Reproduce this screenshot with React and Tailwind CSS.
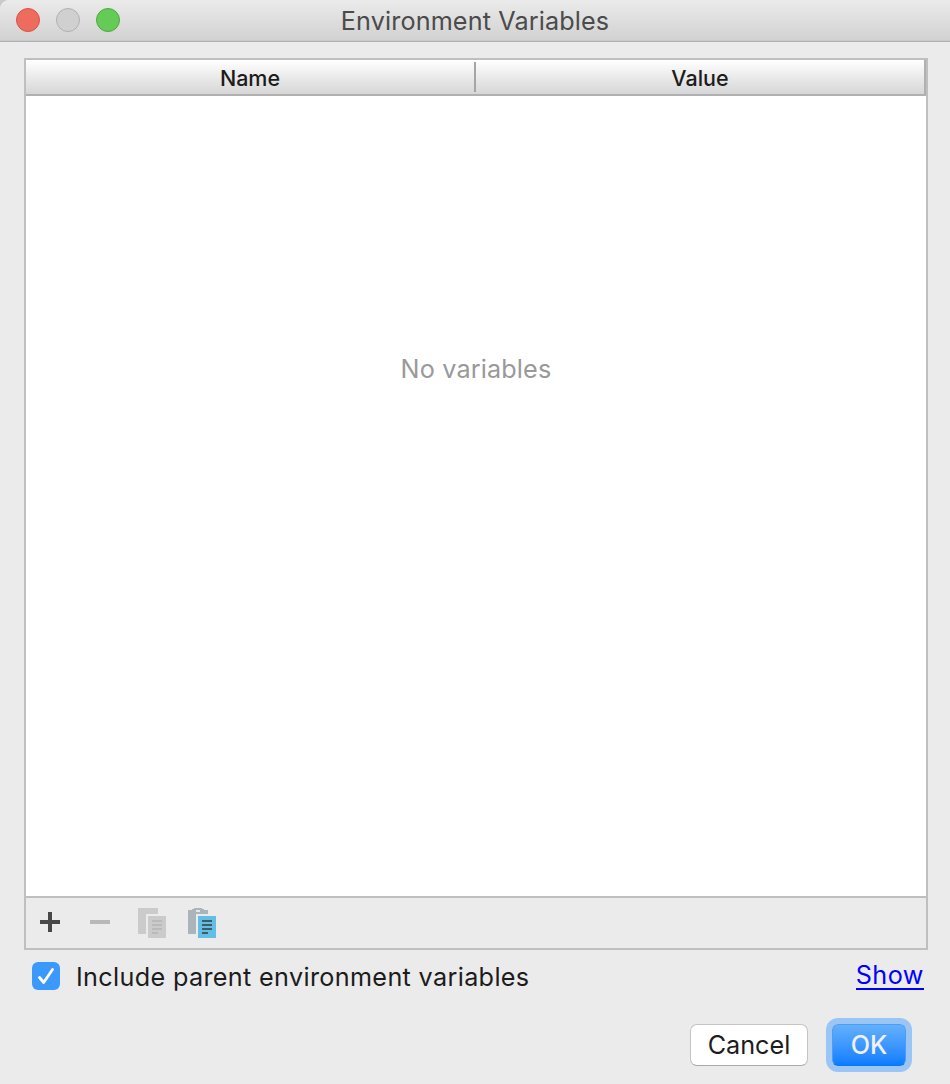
import React from "react";

function TitleBar() {
  return (
    <header className="grid h-[42px] shrink-0 grid-cols-[1fr_auto_1fr] items-center rounded-tl-[9px] border-b border-[#b1b1b1] bg-linear-to-b from-[#ebebeb] to-[#d1d1d1] px-4 shadow-[inset_0_-1px_0_#c8c8c8]">
      <div className="flex gap-4 pb-[1px]">
        <span className="size-6 rounded-full border border-[#d65448] bg-[#ee6b60]" />
        <span className="size-6 rounded-full border border-[#b0b0b0] bg-[#d0d0d0]" />
        <span className="size-6 rounded-full border border-[#51a842] bg-[#63cb56]" />
      </div>
      <h1 className="text-[25.2px] leading-[30px] tracking-[0.12px] whitespace-nowrap text-[#4b4b4b]">Environment Variables</h1>
    </header>
  );
}

function TableHeader() {
  return (
    <div className="flex h-9 shrink-0 items-center border-b-2 border-[#b0b0b0] bg-linear-to-b from-white to-[#d6d6d6] text-[21.5px] leading-[26px] font-medium text-[#1c1c1c]">
      <div className="w-[448px] pt-[2px] text-center">Name</div>
      <div className="h-[30px] w-[2px] bg-[#a5a5a5]" />
      <div className="flex-1 pt-[2px] text-center">Value</div>
      <div className="h-full w-[2px] bg-[#b0b0b0]" />
    </div>
  );
}

function Toolbar() {
  return (
    <div className="flex h-[52px] shrink-0 items-center border-t-2 border-[#bfbfbf] bg-[#ebebeb]">
      <svg width="200" height="50" viewBox="26 898 200 50" shapeRendering="crispEdges">
        <path d="M48 912h4v8h8v4h-8v8h-4v-8h-8v-4h8z" fill="#484848" />
        <path d="M90 920h20v4H90z" fill="#b8b8b8" />
        <path d="M138 908h20v6h-12v20h-8z" fill="#cbcbcb" />
        <path d="M148 916h18v22h-18z" fill="#cbcbcb" />
        <path d="M152 920h10v2h-10zM152 924h10v2h-10zM152 928h10v2h-10zM152 932h6v2h-6z" fill="#bababa" />
        <path d="M188 910h4v-1h2v-1h8v1h2v1h4v4h-12v20h-8z" fill="#aab4bb" />
        <path d="M196 910h4v2h-4z" fill="#e4e7e9" />
        <path d="M198 916h18v22h-18z" fill="#62bee2" />
        <path d="M202 920h10v2h-10zM202 924h10v2h-10zM202 928h10v2h-10zM202 932h6v2h-6z" fill="#3c5c69" />
      </svg>
    </div>
  );
}

export default function App() {
  return (
    <div className="h-[1084px] w-[950px] bg-[#c9c9c9] font-['Inter','Liberation_Sans',sans-serif]">
      <div className="flex h-full flex-col rounded-tl-[9px] bg-[#ebebeb]">
        <TitleBar />
        <section className="mt-4 ml-6 flex h-[892px] w-[904px] shrink-0 flex-col border-2 border-[#bfbfbf]">
          <TableHeader />
          <div className="flex-1 bg-white pt-[258px] text-center text-[25.2px] leading-[30px] tracking-[0.15px] text-[#999]">No variables</div>
          <Toolbar />
        </section>
        <div className="flex h-[52px] shrink-0 items-start justify-between pr-[26px] pl-8">
          <label className="flex items-center gap-4 pt-3 text-[25.2px] leading-[28px] text-[#1c1c1c]">
            <span className="flex size-7 items-center justify-center rounded-[6px] bg-[#3b99fc]">
              <svg width="28" height="28" viewBox="0 0 28 28" fill="none" stroke="white" strokeWidth="2.8" strokeLinecap="round" strokeLinejoin="round">
                <path d="M7.5 15.5l4.2 5L20.5 7.5" />
              </svg>
            </span>
            <span className="-mb-[2px] tracking-[0.34px] whitespace-nowrap">Include parent environment variables</span>
          </label>
          <a className="mt-[10px] h-[30px] border-b-2 border-[#0000ff] text-[25.2px] leading-[30px] tracking-[0.5px] text-[#0000ff]">Show</a>
        </div>
        <footer className="mt-[22px] flex justify-end gap-6 pr-11">
          <button className="h-[42px] w-[118px] rounded-[7px] border border-[#c4c4c4] border-b-[#a9a9a9] bg-white text-[25.2px] leading-[38px] text-[#1c1c1c]">Cancel</button>
          <button className="h-[42px] w-[74px] rounded-[6px] border border-[#4b9df5] border-b-[#0d76f5] bg-linear-to-b from-[#63b0fb] to-[#077dff] text-[25.2px] leading-[38px] font-medium text-[#f1f1f5] shadow-[0_0_0_6px_#9bc5f5]">OK</button>
        </footer>
      </div>
    </div>
  );
}
